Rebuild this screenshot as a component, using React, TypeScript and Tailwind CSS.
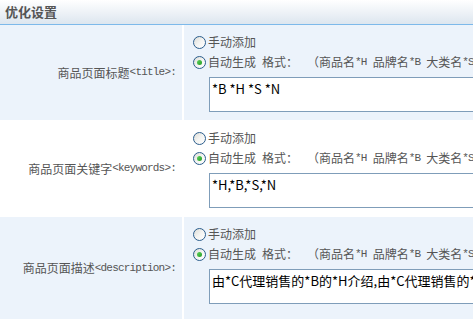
import React from "react";

const cjk = '"Noto Sans CJK SC", "Noto Sans", sans-serif';
const mono = '"Liberation Mono", "Noto Sans CJK SC", monospace';

type Row = {
  name: string;
  tag: string;
  value: string;
  shaded: boolean;
};

const rows: Row[] = [
  { name: "商品页面标题", tag: "<title>", value: "*B *H *S *N", shaded: true },
  { name: "商品页面关键字", tag: "<keywords>", value: "*H,*B,*S,*N", shaded: false },
  {
    name: "商品页面描述",
    tag: "<description>",
    value: "由*C代理销售的*B的*H介绍,由*C代理销售的*B的*H介绍",
    shaded: true,
  },
];

function Radio({ checked }: { checked?: boolean }) {
  return (
    <span className="relative mr-[2px] inline-flex h-[13px] w-[13px] shrink-0 items-center justify-center rounded-full border border-[#2b5d8c] bg-gradient-to-br from-[#dcdcd6] via-[#f4f4f2] to-white">
      {checked && (
        <span className="h-[5px] w-[5px] rounded-full bg-gradient-to-br from-[#5ed35e] to-[#1e9c1e]" />
      )}
    </span>
  );
}

function Code({ children }: { children: React.ReactNode }) {
  return (
    <span className="text-[11px] tracking-[-0.8px]" style={{ fontFamily: mono }}>
      {children}
    </span>
  );
}

function SettingRow({ row, last }: { row: Row; last?: boolean }) {
  const bg = row.shaded ? "bg-[#ecf3fb]" : "bg-white";
  return (
    <div className={`flex ${last ? "h-[103px]" : "h-[96px]"} border-b border-white`}>
      <div
        className={`flex w-[182px] shrink-0 items-center justify-end pr-[6px] text-[12px] text-[#555] ${bg}`}
        style={{ fontFamily: cjk }}
      >
        <span>{row.name}</span>
        <Code>{row.tag}:</Code>
      </div>
      <div className={`ml-[2px] min-w-0 flex-1 overflow-hidden pl-[9px] pt-[7px] ${bg}`}>
        <div className="flex h-[20px] items-center text-[12px] text-[#555]" style={{ fontFamily: cjk }}>
          <Radio />
          <span>手动添加</span>
        </div>
        <div
          className="flex h-[20px] items-center whitespace-nowrap text-[12px] text-[#555]"
          style={{ fontFamily: cjk }}
        >
          <Radio checked />
          <span>自动生成</span>
          <span className="ml-[6px]">格式：</span>
          <span className="ml-[9px]">（商品名</span>
          <Code>*H</Code>
          <span className="ml-[6px]">品牌名</span>
          <Code>*B</Code>
          <span className="ml-[6px]">大类名</span>
          <Code>*S</Code>
          <span className="ml-[6px]">小类名</span>
          <Code>*N</Code>
          <span>）</span>
        </div>
        <textarea
          readOnly
          value={row.value}
          className="ml-[16px] mt-[5px] block h-[35px] w-[420px] resize-none overflow-hidden border border-[#7f9db9] bg-white px-[2px] py-[1px] text-[13px] leading-[20px] text-black outline-none"
          style={{ fontFamily: cjk }}
        />
      </div>
    </div>
  );
}

export default function App() {
  return (
    <div className="h-[321px] w-full overflow-hidden bg-white">
      <div className="flex h-[25px] items-center border-b border-[#7db9ea] bg-gradient-to-b from-white to-[#dde6ef] pl-[5px]">
        <span className="text-[13px] font-bold text-[#555]" style={{ fontFamily: cjk }}>
          优化设置
        </span>
      </div>
      {rows.map((row, i) => (
        <SettingRow key={row.name} row={row} last={i === rows.length - 1} />
      ))}
    </div>
  );
}
